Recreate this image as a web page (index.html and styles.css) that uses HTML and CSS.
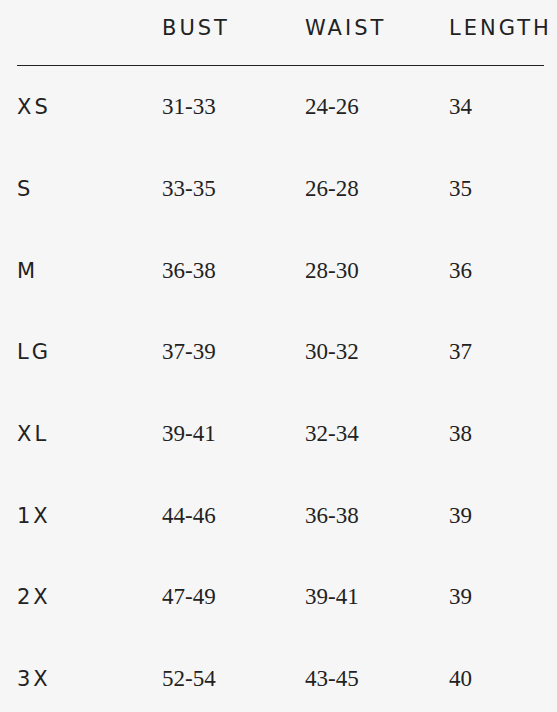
FILE: index.html
```html
<!DOCTYPE html>
<html>
<head>
<meta charset="utf-8">
<link rel="stylesheet" href="styles.css">
</head>
<body>
<div class="table">
  <div class="row head">
    <div class="cell"></div>
    <div class="cell label">BUST</div>
    <div class="cell label">WAIST</div>
    <div class="cell label">LENGTH</div>
  </div>
  <div class="row"><div class="cell label">XS</div><div class="cell num">31-33</div><div class="cell num">24-26</div><div class="cell num">34</div></div>
  <div class="row"><div class="cell label">S</div><div class="cell num">33-35</div><div class="cell num">26-28</div><div class="cell num">35</div></div>
  <div class="row"><div class="cell label">M</div><div class="cell num">36-38</div><div class="cell num">28-30</div><div class="cell num">36</div></div>
  <div class="row"><div class="cell label">LG</div><div class="cell num">37-39</div><div class="cell num">30-32</div><div class="cell num">37</div></div>
  <div class="row"><div class="cell label">XL</div><div class="cell num">39-41</div><div class="cell num">32-34</div><div class="cell num">38</div></div>
  <div class="row"><div class="cell label">1X</div><div class="cell num">44-46</div><div class="cell num">36-38</div><div class="cell num">39</div></div>
  <div class="row"><div class="cell label">2X</div><div class="cell num">47-49</div><div class="cell num">39-41</div><div class="cell num">39</div></div>
  <div class="row"><div class="cell label">3X</div><div class="cell num">52-54</div><div class="cell num">43-45</div><div class="cell num">40</div></div>
</div>
</body>
</html>
```

FILE: styles.css
```css
html, body {
  margin: 0;
  padding: 0;
  background: #f6f6f6;
  color: #222;
}
body {
  padding-left: 17px;
  overflow: hidden;
}
.table {
  width: 527px;
}
.row {
  display: grid;
  grid-template-columns: 145px 143px 144px 95px;
  height: 81.7px;
  align-items: center;
  padding-top: 1px;
  box-sizing: border-box;
}
.row.head {
  height: 66px;
  padding-top: 2px;
  padding-bottom: 12px;
  border-bottom: 1px solid #222;
  align-items: center;
}
.cell {
  white-space: nowrap;
}
.label {
  font-family: "DejaVu Sans", sans-serif;
  font-size: 21px;
  letter-spacing: 3px;
  color: #222;
}
.num {
  font-family: "Liberation Serif", "Times New Roman", "DejaVu Serif", serif;
  font-size: 23px;
  color: #222;
}
```
